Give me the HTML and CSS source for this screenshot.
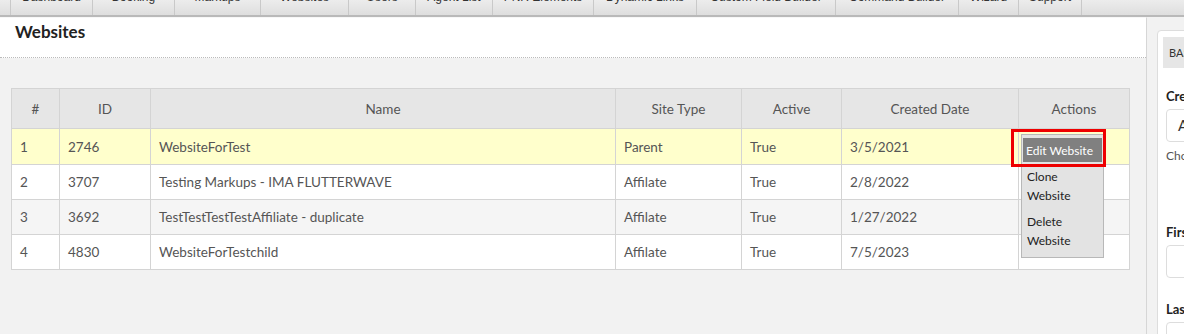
FILE: index.html
```html
<!DOCTYPE html>
<html lang="en">

<head>
  <meta charset="UTF-8">
  <meta name="viewport" content="width=device-width, initial-scale=1.0">
  <title>Websites</title>
  <link rel="stylesheet" href="styles.css">
</head>

<body>
  <nav class="tabs">
    <a class="tab"><span>Dashboard</span></a>
    <a class="tab"><span>Booking</span></a>
    <a class="tab"><span>Markups</span></a>
    <a class="tab"><span>Websites</span></a>
    <a class="tab"><span>Users</span></a>
    <a class="tab"><span>Agent List</span></a>
    <a class="tab"><span>PNR Elements</span></a>
    <a class="tab"><span>Dynamic Links</span></a>
    <a class="tab"><span>Custom Field Builder</span></a>
    <a class="tab"><span>Command Builder</span></a>
    <a class="tab"><span>Wizard</span></a>
    <a class="tab"><span>Support</span></a>
  </nav>

  <div class="layout">
    <main class="main">
      <div class="page-header">
        <h2>Websites</h2>
      </div>

      <div class="content">
        <table class="grid">
          <thead>
            <tr>
              <th class="col-num">#</th>
              <th class="col-id">ID</th>
              <th class="col-name">Name</th>
              <th class="col-type">Site Type</th>
              <th class="col-active">Active</th>
              <th class="col-date">Created Date</th>
              <th class="col-actions">Actions</th>
            </tr>
          </thead>
          <tbody>
            <tr class="selected">
              <td>1</td>
              <td>2746</td>
              <td>WebsiteForTest</td>
              <td>Parent</td>
              <td>True</td>
              <td>3/5/2021</td>
              <td class="actions">
                <div class="highlight"></div>
                <div class="dropdown">
                  <a class="dropdown-item active">Edit Website</a>
                  <a class="dropdown-item">Clone<br>Website</a>
                  <a class="dropdown-item">Delete<br>Website</a>
                </div>
              </td>
            </tr>
            <tr>
              <td>2</td>
              <td>3707</td>
              <td>Testing Markups - IMA FLUTTERWAVE</td>
              <td>Affilate</td>
              <td>True</td>
              <td>2/8/2022</td>
              <td class="actions"></td>
            </tr>
            <tr class="alt">
              <td>3</td>
              <td>3692</td>
              <td>TestTestTestTestAffiliate - duplicate</td>
              <td>Affilate</td>
              <td>True</td>
              <td>1/27/2022</td>
              <td class="actions"></td>
            </tr>
            <tr>
              <td>4</td>
              <td>4830</td>
              <td>WebsiteForTestchild</td>
              <td>Affilate</td>
              <td>True</td>
              <td>7/5/2023</td>
              <td class="actions"><span class="link-mark"></span></td>
            </tr>
          </tbody>
        </table>
      </div>
    </main>

    <aside class="side">
      <div class="card">
        <div class="card-tab">BASIC</div>
        <label class="field-label">Create</label>
        <div class="input"><span>A</span></div>
        <div class="hint">Choose</div>
        <label class="field-label first">First</label>
        <div class="input"></div>
        <label class="field-label last">Last</label>
        <div class="input"></div>
      </div>
    </aside>
  </div>
</body>

</html>
```

FILE: styles.css
```css
body {
  margin: 0;
  font-family: Lato, "Open Sans", Arial, sans-serif;
  font-size: 13px;
  color: #555;
  background-color: #f2f2f2;
  overflow: hidden;
  height: 334px;
}

.tabs {
  display: grid;
  grid-template-columns: 82px 82px 86px 88px 67px 77px 101px 103px 139px 123px 60px 64px;
  height: 15px;
  padding-left: 10px;
  overflow: hidden;
  background: linear-gradient(#ececec, #dedede);
  border-bottom: 2px solid #b9b9b9;
}

.tab {
  border-left: 1px solid #c9c9c9;
  text-align: center;
  color: #333;
  font-family: "Liberation Sans", Arial, sans-serif;
  font-size: 12px;
}

.tab span {
  display: block;
  margin-top: -10px;
  line-height: 14px;
}

.tab:last-child {
  border-right: 1px solid #c9c9c9;
}

.layout {
  display: flex;
  height: 317px;
  overflow: hidden;
}

.main {
  width: 1146px;
  border-right: 1px solid #d6d6d6;
  border-top: 1px solid #f7f7f7;
}

.page-header {
  background-color: #fff;
  height: 39px;
  border-bottom: 1px dotted #bbb;
  padding-left: 15px;
}

.page-header h2 {
  margin: 0;
  padding-top: 3px;
  font-size: 17px;
  font-weight: 700;
  color: #222;
}

.content {
  padding: 30px 16px 0 11px;
}

.grid {
  width: 1119px;
  border-collapse: collapse;
  background-color: #fff;
  border: 1px solid #d4d4d4;
}

.grid th,
.grid td {
  border: 1px solid #d4d4d4;
  text-align: left;
  padding: 0 8px;
}

.grid th {
  background-color: #e6e6e6;
  font-weight: 400;
  text-align: center;
  height: 39px;
  color: #555;
  font-size: 13.5px;
}

.grid td {
  height: 34px;
  color: #555;
  font-size: 13.5px;
}

.col-num { width: 31px; }
.col-id { width: 74px; }
.col-name { width: 448px; }
.col-type { width: 109px; }
.col-active { width: 83px; }
.col-date { width: 160px; }

.grid tr.selected td {
  background-color: #ffffcc;
  height: 35px;
}

.grid tr.alt td {
  background-color: #f5f5f5;
}

.actions {
  position: relative;
}

.link-mark {
  position: absolute;
  left: 13px;
  top: 17px;
  width: 4px;
  height: 2px;
  background-color: #1a73e8;
}

.highlight {
  position: absolute;
  left: -8px;
  top: 0;
  width: 89px;
  height: 32px;
  border: 3px solid #ee0000;
  z-index: 2;
}

.dropdown {
  position: absolute;
  left: 2px;
  top: 5px;
  width: 79px;
  padding: 3px 1px 7px;
  background-color: #e3e3e3;
  border: 1px solid #b8b8b8;
  z-index: 1;
}

.dropdown-item {
  display: block;
  padding: 0 4px;
  color: #222;
  font-size: 12px;
  line-height: 19px;
}

.dropdown-item.active {
  background-color: #808080;
  color: #fff;
  padding: 3px 3px 2px;
  margin-bottom: 5px;
}

.dropdown-item + .dropdown-item + .dropdown-item {
  margin-top: 7px;
}

.side {
  flex: 1;
  background-color: #f2f2f2;
  padding: 13px 0 0 10px;
}

.card {
  background-color: #fff;
  border: 1px solid #ddd;
  border-radius: 4px 0 0 4px;
  height: 300px;
  padding: 6px 0 0 5px;
  white-space: nowrap;
  overflow: hidden;
}

.card-tab {
  background-color: #e6e6e6;
  height: 31px;
  line-height: 31px;
  padding-left: 6px;
  font-size: 11px;
  color: #333;
}

.field-label {
  display: block;
  font-weight: 700;
  color: #222;
  margin: 20px 0 5px 3px;
  font-size: 13px;
}

.field-label.first {
  margin-top: 61px;
}

.field-label.last {
  margin-top: 23px;
}

.input {
  height: 31px;
  margin-left: 3px;
  border: 1px solid #ddd;
  border-radius: 4px 0 0 4px;
  line-height: 31px;
  padding-left: 11px;
  font-size: 15px;
  color: #333;
}

.hint {
  margin: 6px 0 0 3px;
  font-size: 12px;
  color: #555;
}
```
